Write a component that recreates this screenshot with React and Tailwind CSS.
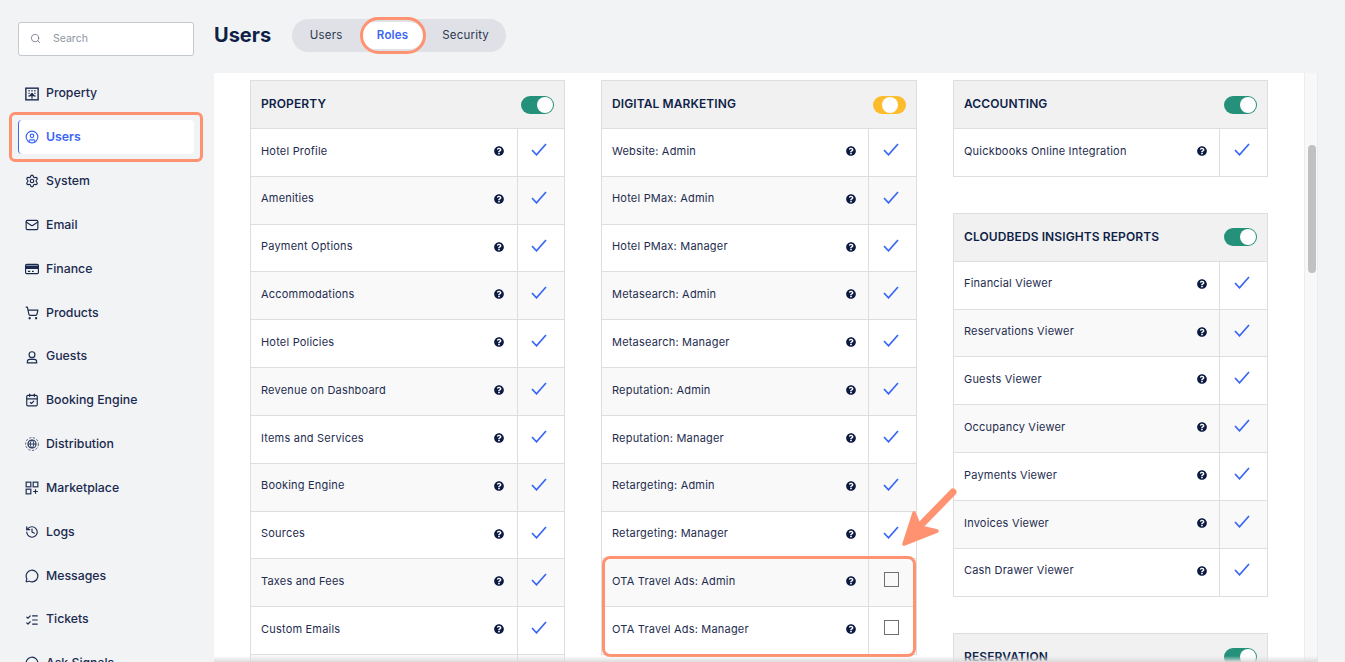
import React from "react";
import { CircleUser, Settings, Mail, ShoppingCart, CalendarCheck, History, MessageCircle, ListChecks, Search } from "lucide-react";
import { FaQuestionCircle } from "react-icons/fa";

const S = { width: 14, height: 14, viewBox: "0 0 24 24", fill: "none", stroke: "currentColor", strokeWidth: 2 };
const Property = () => (
  <svg {...S}><rect x="1.5" y="2" width="21" height="20" strokeWidth="2.4" /><path d="M6 6.5h2M11 6.5h2M16 6.5h2M6 11h2M16 11h2M6 15.5h2M16 15.5h2" strokeWidth="2.4" /><path d="M12 11v9M8.5 15l3.5-4 3.5 4z" fill="currentColor" /></svg>
);
const Finance = () => (
  <svg {...S}><rect x="1" y="4" width="22" height="16" rx="2" /><path d="M1 7h22v4H1zM5 16h4M12 16h3" fill="currentColor" /></svg>
);
const Guest = () => (
  <svg {...S}><circle cx="12" cy="8" r="5" /><path d="M4 22v-2a4 4 0 0 1 4-4h8a4 4 0 0 1 4 4v2z" /></svg>
);
const Market = () => (
  <svg {...S}><rect x="2" y="2" width="8" height="8" /><rect x="14" y="2" width="8" height="8" /><rect x="2" y="14" width="8" height="8" /><path d="M18 14v8M14 18h8" /></svg>
);
const Distribution = () => (
  <svg {...S} width="16" height="16"><circle cx="12" cy="12" r="7" strokeWidth="1.8" /><path d="M5 12h14M12 5c-4 4-4 10 0 14M12 5c4 4 4 10 0 14" strokeWidth="1.5" /><circle cx="12" cy="12" r="11" strokeWidth="1.2" strokeDasharray="4 2.5" /></svg>
);
const I = (C) => () => <C size={14} strokeWidth={2} />;

const nav = [
  ["Property", Property], ["Users", I(CircleUser)], ["System", I(Settings)], ["Email", I(Mail)],
  ["Finance", Finance], ["Products", I(ShoppingCart)], ["Guests", Guest], ["Booking Engine", I(CalendarCheck)],
  ["Distribution", Distribution], ["Marketplace", Market], ["Logs", I(History)], ["Messages", I(MessageCircle)],
  ["Tickets", I(ListChecks)], ["Ask Signals", I(MessageCircle)],
];

const Check = ({ wide }) => (
  <svg width="16" height="13" viewBox="0 0 16 13" fill="none" stroke="#3a66f5" strokeWidth="1.7" className={wide ? "mb-[6px] mr-[3px]" : "mb-[6px] mr-[4px]"}><path d="M1 7 5.5 11.8 15 1" /></svg>
);

function Toggle({ amber }) {
  return (
    <div className={`w-[33px] h-[18px] rounded-full flex items-center justify-end ${amber ? "bg-[#fdbc2c] pr-[8px]" : "bg-[#26917a] pr-[1px]"}`}>
      <div className="w-[16px] h-[16px] rounded-full bg-white" />
    </div>
  );
}

function Card({ title, rows, amber, unchecked = [], wide }) {
  return (
    <section className="border border-[#dedede] border-b-0">
      <header className="h-[48px] bg-[#f1f1f1] border-b border-[#dedede] flex items-center justify-between pl-[10px] pr-[10px]">
        <h3 className="text-[12px] font-semibold text-[#0f1f48] tracking-[0.1px] pb-[1px]">{title}</h3>
        <Toggle amber={amber} />
      </header>
      {rows.map((r, i) => (
        <div key={i} className={`h-[47.83px] border-b border-[#dedede] flex ${i % 2 ? "bg-[#f9f9f9]" : "bg-white"}`}>
          <div className={`flex-1 flex items-center justify-between pl-[10px] pb-[3px] border-r border-[#dedede] text-[11px] text-[#1e2c4f] tracking-[0.2px] ${wide ? "pr-[12px]" : "pr-[13px]"}`}>
            <span>{r}</span>
            {r && <FaQuestionCircle size={10} className="text-[#0b1a40]" />}
          </div>
          <div className={`${wide ? "w-[47px]" : "w-[46px]"} flex items-center justify-center`}>
            {unchecked.includes(r) ? <div className="w-[15px] h-[15px] border border-[#6f6f6f] mb-[6px] mr-[2px]" /> : r && <Check wide={wide} />}
          </div>
        </div>
      ))}
    </section>
  );
}

const property = ["Hotel Profile", "Amenities", "Payment Options", "Accommodations", "Hotel Policies", "Revenue on Dashboard", "Items and Services", "Booking Engine", "Sources", "Taxes and Fees", "Custom Emails", ""];
const marketing = ["Website: Admin", "Hotel PMax: Admin", "Hotel PMax: Manager", "Metasearch: Admin", "Metasearch: Manager", "Reputation: Admin", "Reputation: Manager", "Retargeting: Admin", "Retargeting: Manager", "OTA Travel Ads: Admin", "OTA Travel Ads: Manager"];
const insights = ["Financial Viewer", "Reservations Viewer", "Guests Viewer", "Occupancy Viewer", "Payments Viewer", "Invoices Viewer", "Cash Drawer Viewer"];

export default function App() {
  return (
    <div className="h-[662px] w-[1345px] overflow-hidden flex bg-[#f2f3f5] text-[#1a2a4f]" style={{ fontFamily: '"Inter", "Liberation Sans", sans-serif' }}>
      <aside className="w-[214px] shrink-0 pl-[18px] pr-[20px] pt-[22px]">
        <div className="h-[34px] bg-white border border-[#c3c7ce] rounded-[3px] flex items-center pl-[11px] pb-[1px] gap-[12px] text-[10.5px] text-[#8d95a3]">
          <Search size={11} strokeWidth={1.8} className="text-[#6d7685]" />
          <span>Search</span>
        </div>
        <nav className="mt-[20px] relative">
          {nav.map(([label, Icon]) => {
            const active = label === "Users";
            return (
              <div key={label} className={`h-[34px] mb-[9.85px] pt-[1px] flex items-center gap-[7px] rounded-[4px] text-[12.3px] font-medium ${active ? "bg-white text-[#3a66f5] border-l border-[#3a66f5] font-semibold pl-[6px]" : "text-[#1a2a4f] pl-[7px]"}`}>
                <span className="w-[14px] flex justify-center shrink-0"><Icon /></span>
                <span>{label}</span>
              </div>
            );
          })}
          <div className="absolute left-[-9px] top-[36px] w-[194px] h-[50px] border-[3px] border-[#ff9270] rounded-[6px]" />
        </nav>
      </aside>

      <main className="flex-1 min-w-0 flex flex-col">
        <header className="h-[73px] shrink-0 flex items-start pt-[19px] gap-[21px]">
          <h1 className="text-[20px] leading-[32px] font-bold text-[#0f1f48]">Users</h1>
          <div className="relative h-[33px] w-[214px] rounded-full bg-[#dfe1e6] flex items-center pl-[3px] text-[11.5px] tracking-[0.2px]">
            <span className="w-[67px] pr-[5px] text-center text-[#2c3850]">Users</span>
            <span className="w-[61px] h-[27px] rounded-full bg-white text-[#3a66f5] font-semibold flex items-center justify-center">Roles</span>
            <span className="w-[80px] pl-[5px] text-center text-[#2c3850]">Security</span>
            <div className="absolute left-[68px] top-[-2px] w-[66px] h-[37px] rounded-full border-[3px] border-[#ff9270]" />
          </div>
        </header>

        <div className="flex-1 min-h-0 flex relative">
          <div className="w-[1091px] bg-white overflow-hidden pl-[36px] pt-[7px] border-r border-[#ececec]">
            <div className="relative grid grid-cols-[315px_316px_315px] gap-x-[36px] items-start">
              <Card title="PROPERTY" rows={property} />
              <Card title="DIGITAL MARKETING" rows={marketing} amber wide unchecked={["OTA Travel Ads: Admin", "OTA Travel Ads: Manager"]} />
              <div className="flex flex-col gap-[36px]">
                <Card title="ACCOUNTING" rows={["Quickbooks Online Integration"]} wide />
                <Card title="CLOUDBEDS INSIGHTS REPORTS" rows={insights} wide />
                <Card title="RESERVATION" rows={[""]} wide />
              </div>
              <div className="absolute left-[352px] top-[476px] w-[314px] h-[101px] border-[3px] border-[#ff9270] rounded-[8px]" />
              <svg className="absolute left-[650px] top-[400px]" width="70" height="70" viewBox="0 0 70 70" fill="none" stroke="#ff9270" strokeLinecap="round" strokeLinejoin="round">
                <path d="M53 12 18 48" strokeWidth="7" />
                <path d="M4 64 14 33 20 47 37 51Z" fill="#ff9270" strokeWidth="3.5" />
              </svg>
            </div>
          </div>
          <div className="w-[13px] bg-[#f8f8f8] border-r border-[#ececec] pl-[3px] pt-[72px]">
            <div className="w-[8px] h-[128px] rounded-full bg-[#c1c1c1]" />
          </div>
          <div className="absolute left-0 right-[27px] bottom-0 h-[6px] bg-gradient-to-b from-transparent to-[#dcdcdc]" />
        </div>
      </main>
    </div>
  );
}
